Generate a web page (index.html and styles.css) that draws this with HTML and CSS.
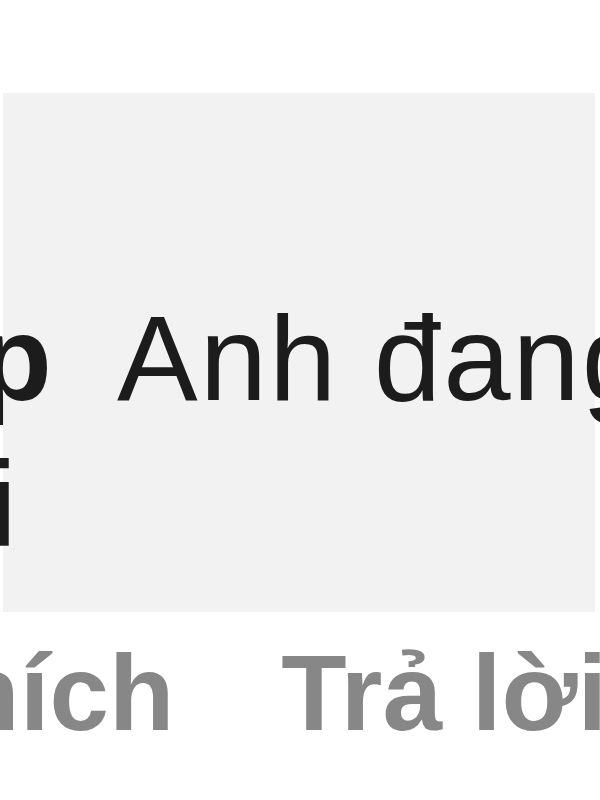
FILE: index.html
```html
<!DOCTYPE html>
<html lang="vi">
<head>
    <meta charset="UTF-8">
    <meta name="viewport" content="width=device-width, initial-scale=1.0">
    <title>Bình luận</title>
    <link rel="stylesheet" href="styles.css">
</head>
<body>
    <div class="comment">
        <div class="bubble">
            <p class="text"><span class="line first"><b class="name">p</b>Anh đang</span><span class="line">i</span></p>
        </div>
        <div class="actions">
            <span class="action">Thích</span>
            <span class="action">Trả lời</span>
        </div>
    </div>
</body>
</html>
```

FILE: styles.css
```css
/* Toàn trang */
html, body {
    margin: 0;
    padding: 0;
    background-color: #fff;
    overflow: hidden;
    width: 600px;
    height: 800px;
}

body {
    font-family: "Liberation Sans", Arial, sans-serif;
    color: #1c1c1c;
}

/* Khung bình luận */
.comment {
    padding-top: 93px;
}

.bubble {
    margin-left: 3px;
    width: 592px;
    height: 519px;
    background-color: #f2f2f2;
    box-sizing: border-box;
    padding-top: 193px;
}

.text {
    margin: 0 0 0 -13px;
    font-size: 121px;
    line-height: 145px;
    letter-spacing: 2px;
    white-space: nowrap;
}

.line {
    display: block;
}

.first {
    margin-left: -12px;
}

.name {
    font-weight: bold;
    letter-spacing: 0;
    margin-right: 65px;
}

/* Thích / Trả lời */
.actions {
    display: flex;
    gap: 107px;
    margin-left: -111px;
    padding-top: 21px;
    font-size: 107px;
    line-height: 120px;
    font-weight: bold;
    color: #878787;
    white-space: nowrap;
}
```
